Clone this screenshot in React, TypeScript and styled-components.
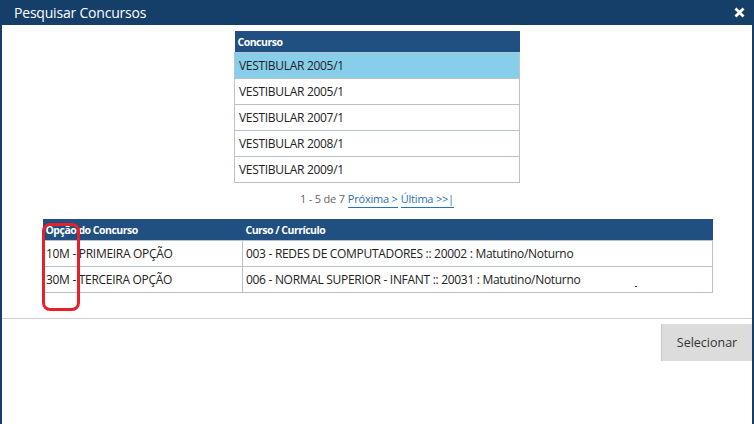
import React from "react";
import styled, { createGlobalStyle } from "styled-components";

const concursos = [
  "VESTIBULAR 2005/1",
  "VESTIBULAR 2005/1",
  "VESTIBULAR 2007/1",
  "VESTIBULAR 2008/1",
  "VESTIBULAR 2009/1",
];

const opcoes = [
  { opcao: "10M - PRIMEIRA OPÇÃO", curso: "003 - REDES DE COMPUTADORES :: 20002 : Matutino/Noturno" },
  { opcao: "30M - TERCEIRA OPÇÃO", curso: "006 - NORMAL SUPERIOR - INFANT :: 20031 : Matutino/Noturno" },
];

const App = () => {
  return (
    <>
      <GlobalStyle />
      <Dialog>
        <TitleBar>
          <Title>Pesquisar Concursos</Title>
          <CloseButton aria-label="Fechar">
            <svg width="11" height="11" viewBox="0 0 11 11">
              <path d="M1.5 1.5 L9.5 9.5 M9.5 1.5 L1.5 9.5" stroke="#fff" strokeWidth="2.8" />
            </svg>
          </CloseButton>
        </TitleBar>
        <Body>
          <ListTable>
            <thead>
              <tr>
                <HeadCell>Concurso</HeadCell>
              </tr>
            </thead>
            <tbody>
              {concursos.map((c, i) => (
                <tr key={i}>
                  <ListCell $selected={i === 0}>{c}</ListCell>
                </tr>
              ))}
            </tbody>
          </ListTable>
          <Pager>
            1 - 5 de 7 <PagerLink>Próxima &gt;</PagerLink> <PagerLink>Última &gt;&gt;|</PagerLink>
          </Pager>
          <OptionTable>
            <thead>
              <tr>
                <HeadCell $width={197}>Opção do Concurso</HeadCell>
                <HeadCell>Curso / Currículo</HeadCell>
              </tr>
            </thead>
            <tbody>
              {opcoes.map((o) => (
                <tr key={o.opcao}>
                  <OptionCell>{o.opcao}</OptionCell>
                  <OptionCell>{o.curso}</OptionCell>
                </tr>
              ))}
            </tbody>
          </OptionTable>
          <Separator />
          <Footer>
            <SelectButton>Selecionar</SelectButton>
          </Footer>
          <Highlight />
          <Speck />
        </Body>
      </Dialog>
    </>
  );
};

export default App;

const GlobalStyle = createGlobalStyle`
  html, body {
    margin: 0;
    padding: 0;
    background: #fff;
  }
  body {
    font-family: "Open Sans", "Noto Sans", sans-serif;
  }
`;

const Dialog = styled.div`
  width: 754px;
  height: 424px;
  display: flex;
  flex-direction: column;
  overflow: hidden;
`;

const TitleBar = styled.div`
  height: 25px;
  flex-shrink: 0;
  background: #153e68;
  display: flex;
  align-items: center;
  justify-content: space-between;
  padding: 0 8px 0 14px;
`;

const Title = styled.span`
  color: #fff;
  font-size: 14px;
  letter-spacing: -0.2px;
`;

const CloseButton = styled.button`
  background: none;
  border: 0;
  padding: 0;
  width: 11px;
  height: 11px;
  display: flex;
  margin-right: 1px;
`;

const Body = styled.div`
  position: relative;
  flex: 1;
  border-left: 2px solid #153e68;
  border-right: 2px solid #153e68;
  display: flex;
  flex-direction: column;
  padding-top: 6px;
`;

const ListTable = styled.table`
  width: 286px;
  margin-left: 232px;
  border-collapse: collapse;
`;

const HeadCell = styled.th<{ $width?: number }>`
  background: #1f5081;
  color: #fff;
  font-size: 10.5px;
  font-weight: 700;
  letter-spacing: -0.5px;
  text-align: left;
  height: 21px;
  padding: 0 0 0 3px;
  ${(p) => (p.$width ? `width: ${p.$width}px;` : "")}
`;

const ListCell = styled.td<{ $selected?: boolean }>`
  height: 25px;
  padding: 0 0 0 4px;
  border: 1px solid #b9c3cb;
  background: ${(p) => (p.$selected ? "#87ceeb" : "#fff")};
  color: #222;
  font-size: 12px;
  letter-spacing: -0.3px;
`;

const Pager = styled.div`
  box-sizing: border-box;
  height: 36px;
  display: flex;
  align-items: flex-start;
  justify-content: center;
  gap: 3px;
  padding-top: 8px;
  color: #666;
  font-size: 11px;
  line-height: 15px;
  letter-spacing: -0.2px;
`;

const PagerLink = styled.a`
  color: #2a6fb5;
  border-bottom: 1px solid #2a6fb5;
  padding-bottom: 1px;
`;

const OptionTable = styled.table`
  width: 671px;
  margin-left: 40px;
  border-collapse: collapse;
`;

const OptionCell = styled.td`
  height: 25px;
  padding: 0 0 0 3px;
  border: 1px solid #b9c3cb;
  color: #222;
  font-size: 12px;
  letter-spacing: -0.3px;
  white-space: nowrap;
`;

const Separator = styled.hr`
  margin: 25px 0 0;
  border: 0;
  border-top: 1px solid #cfcfcf;
  height: 0;
`;

const Footer = styled.div`
  display: flex;
  justify-content: flex-end;
  padding-top: 5px;
`;

const SelectButton = styled.button`
  width: 91px;
  height: 37px;
  border: 0;
  border-left: 1px solid #cacaca;
  background: #dcdcdc;
  color: #333;
  font-family: inherit;
  font-size: 12.5px;
  padding: 0;
`;

const Highlight = styled.div`
  position: absolute;
  left: 40px;
  top: 198px;
  width: 32px;
  height: 82px;
  border: 3px solid #e8202a;
  border-radius: 8px;
  pointer-events: none;
`;

const Speck = styled.span`
  position: absolute;
  left: 633px;
  top: 261px;
  width: 2px;
  height: 1px;
  background: #333;
`;
